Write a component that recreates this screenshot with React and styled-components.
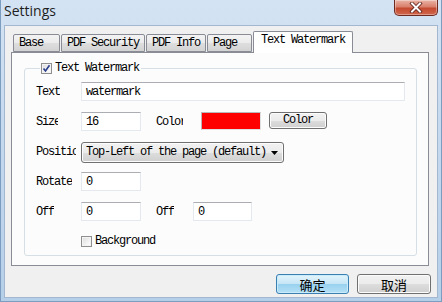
import React from "react";
import styled, { createGlobalStyle } from "styled-components";

const GlobalStyle = createGlobalStyle`
  html, body { margin: 0; padding: 0; }
  body { width: 442px; height: 302px; overflow: hidden; background: #c8dbef; }
`;

const mono = `"Liberation Mono", "DejaVu Sans Mono", monospace`;

const Window = styled.div`
  width: 442px;
  height: 302px;
  box-sizing: border-box;
  display: flex;
  flex-direction: column;
  padding: 0 3px 3px 3px;
  background: linear-gradient(180deg, #d4e3f3 0%, #c6daef 40%, #b6cfe9 100%);
  border-left: 1px solid #7d9dc0;
  border-right: 1px solid #7d9dc0;
  border-bottom: 1px solid #7d9dc0;
`;

const TitleBar = styled.div`
  height: 25px;
  display: flex;
  align-items: flex-start;
  justify-content: space-between;
`;

const Title = styled.span`
  font-family: "Open Sans", "Liberation Sans", sans-serif;
  font-size: 14px;
  color: #1e1e1e;
  margin: 1px 0 0 0;
  line-height: 20px;
`;

const CloseButton = styled.div`
  width: 44px;
  height: 16px;
  box-sizing: border-box;
  border: 1px solid #6e2a20;
  border-top: none;
  border-radius: 0 0 5px 5px;
  background: linear-gradient(180deg, #eab3a5 0%, #d9806c 45%, #c44a30 55%, #d0674c 100%);
  display: flex;
  align-items: center;
  justify-content: center;
  box-shadow: inset 0 0 0 1px rgba(255, 255, 255, 0.35);
`;

const Client = styled.div`
  flex: 1;
  background: #f0f0f0;
  display: flex;
  flex-direction: column;
  border: 1px solid #a3b8d0;
  box-sizing: border-box;
`;

const TabStrip = styled.div`
  display: flex;
  align-items: flex-end;
  margin: 5px 0 0 8px;
  height: 21px;
  position: relative;
  z-index: 1;
`;

const Tab = styled.div`
  width: ${(p) => p.$w}px;
  box-sizing: border-box;
  height: ${(p) => (p.$active ? 22 : 18)}px;
  margin-bottom: ${(p) => (p.$active ? -1 : 0)}px;
  margin-right: ${(p) => (p.$active ? 0 : 1)}px;
  padding-left: ${(p) => (p.$active ? 7 : 5)}px;
  padding-top: 2px;
  border: 1px solid #898c95;
  border-bottom: ${(p) => (p.$active ? "none" : "1px solid #898c95")};
  border-radius: 2px 2px 0 0;
  background: ${(p) =>
    p.$active
      ? "#ffffff"
      : "linear-gradient(180deg, #f3f3f3 0%, #ebebeb 50%, #dedede 51%, #d3d3d3 100%)"};
  font-family: ${mono};
  font-size: 12px;
  letter-spacing: -1.2px;
  line-height: 13px;
  color: #000;
  white-space: nowrap;
`;

const Panel = styled.div`
  margin: 0 8px 0 6px;
  height: 214px;
  box-sizing: border-box;
  border: 1px solid #898c95;
  background: #fcfcfc;
  padding: 9px 11px 9px 12px;
  display: flex;
`;

const Group = styled.fieldset`
  flex: 1;
  margin: 0;
  padding: 7px 0 0 11px;
  border: 1px solid #d5dfe5;
  border-radius: 3px;
  min-width: 0;
`;

const Legend = styled.legend`
  margin-left: 4px;
  padding: 0 2px 0 1px;
  display: flex;
  align-items: center;
  gap: 3px;
  height: 13px;
`;

const Text = styled.span`
  font-family: ${mono};
  font-size: 12px;
  letter-spacing: -1.2px;
  line-height: 13px;
  color: #000;
  white-space: nowrap;
`;

const Box = styled.span`
  width: 11px;
  height: 11px;
  box-sizing: border-box;
  border: 1px solid #8f8f8f;
  background: linear-gradient(135deg, #dcdcdc 0%, #f6f6f6 70%, #ffffff 100%);
  box-shadow: inset 0 0 0 1px #f4f4f4;
  display: flex;
  align-items: center;
  justify-content: center;
  flex: 0 0 auto;
`;

const Rows = styled.div`
  display: flex;
  flex-direction: column;
  gap: 11px;
`;

const Row = styled.div`
  display: flex;
  align-items: center;
  height: 19px;
`;

const Slot = styled.div`
  flex: 0 0 ${(p) => p.$w}px;
  display: flex;
  align-items: center;
`;

const Label = styled(Text)`
  display: block;
  max-width: ${(p) => p.$clip || 60}px;
  overflow: hidden;
  margin-top: 1px;
`;

const Input = styled.div`
  width: ${(p) => p.$w}px;
  height: 19px;
  box-sizing: border-box;
  border: 1px solid #e3e9ef;
  border-top-color: #abadb3;
  background: #fff;
  padding: 1px 0 0 4px;
  display: flex;
  align-items: center;
`;

const Swatch = styled.div`
  width: 60px;
  height: 18px;
  box-sizing: border-box;
  background: #ff0000;
  border: 1px solid;
  border-color: #b8b8b8 #e0e0e0 #e0e0e0 #b8b8b8;
  margin-top: -1px;
`;

const SmallButton = styled.div`
  width: 58px;
  height: 17px;
  margin: -2px 0 0 8px;
  box-sizing: border-box;
  border: 1px solid #707070;
  border-radius: 3px;
  background: linear-gradient(180deg, #f2f2f2 0%, #ebebeb 50%, #dddddd 51%, #cfcfcf 100%);
  box-shadow: inset 0 0 0 1px #fcfcfc;
  display: flex;
  align-items: center;
  justify-content: center;
`;

const Select = styled.div`
  width: 203px;
  height: 21px;
  margin-top: 1px;
  box-sizing: border-box;
  border: 1px solid #707070;
  border-radius: 3px;
  background: linear-gradient(180deg, #f2f2f2 0%, #ebebeb 50%, #dddddd 51%, #cfcfcf 100%);
  box-shadow: inset 0 0 0 1px #fcfcfc;
  display: flex;
  align-items: center;
  justify-content: space-between;
  padding: 1px 5px 0 4px;
`;

const ButtonBar = styled.div`
  display: flex;
  justify-content: flex-end;
  gap: 8px;
  padding: 8px 6px 0 0;
`;

const DlgButton = styled.div`
  width: ${(p) => p.$w}px;
  height: 20px;
  box-sizing: border-box;
  border: 1px solid ${(p) => (p.$default ? "#3c7fb1" : "#707070")};
  border-radius: 3px;
  background: ${(p) =>
    p.$default
      ? "linear-gradient(180deg, #e5f4fc 0%, #c4e5f6 50%, #98d1ef 51%, #b6e0f5 100%)"
      : "linear-gradient(180deg, #f2f2f2 0%, #ebebeb 50%, #dddddd 51%, #cfcfcf 100%)"};
  box-shadow: inset 0 0 0 1px ${(p) => (p.$default ? "#c8ecfc" : "#fcfcfc")};
  display: flex;
  align-items: center;
  justify-content: center;
  font-family: "Noto Sans CJK SC", sans-serif;
  font-size: 13px;
  color: #000;
`;

const Check = ({ checked }) => (
  <Box>
    {checked && (
      <svg width="9" height="9" viewBox="0 0 9 9">
        <path d="M1.5 4.5 L3.5 7 L7.5 1.2" fill="none" stroke="#2a3e8c" strokeWidth="1.6" />
      </svg>
    )}
  </Box>
);

const tabs = [
  ["Base", 47],
  ["PDF Security", 84],
  ["PDF Info", 60],
  ["Page", 45],
];

export default function App() {
  return (
    <>
      <GlobalStyle />
      <Window>
        <TitleBar>
          <Title>Settings</Title>
          <CloseButton>
            <svg width="14" height="11" viewBox="0 0 14 11">
              <path d="M3 1.5 L11 9.5 M11 1.5 L3 9.5" stroke="#5a2018" strokeWidth="3.6" strokeLinecap="square" />
              <path d="M3 1.5 L11 9.5 M11 1.5 L3 9.5" stroke="#ffffff" strokeWidth="2" strokeLinecap="square" />
            </svg>
          </CloseButton>
        </TitleBar>
        <Client>
          <TabStrip>
            {tabs.map(([t, w]) => (
              <Tab key={t} $w={w}>{t}</Tab>
            ))}
            <Tab $w={100} $active>Text Watermark</Tab>
          </TabStrip>
          <Panel>
            <Group>
              <Legend>
                <Check checked />
                <Text>Text Watermark</Text>
              </Legend>
              <Rows>
                <Row>
                  <Slot $w={45}><Label>Text</Label></Slot>
                  <Input $w={324}><Text>watermark</Text></Input>
                </Row>
                <Row>
                  <Slot $w={45}><Label $clip={22}>Size</Label></Slot>
                  <Input $w={60}><Text>16</Text></Input>
                  <Slot $w={45} style={{ marginLeft: 15 }}><Label $clip={27}>Color</Label></Slot>
                  <Swatch />
                  <SmallButton><Text>Color</Text></SmallButton>
                </Row>
                <Row>
                  <Slot $w={45}><Label $clip={40}>Position</Label></Slot>
                  <Select>
                    <Text>Top-Left of the page (default)</Text>
                    <svg width="7" height="4" viewBox="0 0 7 4">
                      <path d="M0 0 H7 L3.5 4 Z" fill="#000" />
                    </svg>
                  </Select>
                </Row>
                <Row>
                  <Slot $w={45}><Label>Rotate</Label></Slot>
                  <Input $w={60}><Text>0</Text></Input>
                </Row>
                <Row>
                  <Slot $w={45}><Label>Off</Label></Slot>
                  <Input $w={60}><Text>0</Text></Input>
                  <Slot $w={37} style={{ marginLeft: 15 }}><Label>Off</Label></Slot>
                  <Input $w={59}><Text>0</Text></Input>
                </Row>
                <Row>
                  <Slot $w={45} />
                  <Check />
                  <Text style={{ marginLeft: 3 }}>Background</Text>
                </Row>
              </Rows>
            </Group>
          </Panel>
          <ButtonBar>
            <DlgButton $w={73} $default>确定</DlgButton>
            <DlgButton $w={74}>取消</DlgButton>
          </ButtonBar>
        </Client>
      </Window>
    </>
  );
}
